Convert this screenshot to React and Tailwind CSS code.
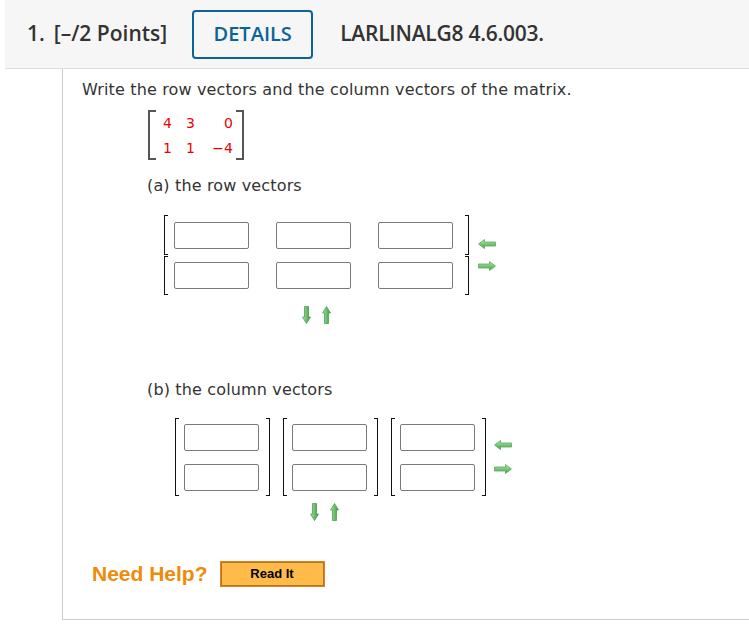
import React from 'react'

function HArrow({ dir }) {
  const id = `h${dir}`
  const pts =
    dir === 'left'
      ? '0.5,5 6.5,0.5 6.5,3 17.5,3 17.5,7 6.5,7 6.5,9.5'
      : '17.5,5 11.5,0.5 11.5,3 0.5,3 0.5,7 11.5,7 11.5,9.5'
  return (
    <svg width="18" height="10" viewBox="0 0 18 10">
      <defs>
        <linearGradient id={id} x1="0" y1="0" x2="0" y2="1">
          <stop offset="0" stopColor="#b8e6b4" />
          <stop offset="0.5" stopColor="#78c878" />
          <stop offset="1" stopColor="#3f9a45" />
        </linearGradient>
      </defs>
      <polygon points={pts} fill={`url(#${id})`} stroke="#5aa85a" strokeWidth="0.8" />
    </svg>
  )
}

function VArrow({ dir }) {
  const id = `v${dir}`
  const pts =
    dir === 'down'
      ? '2.5,0.5 6.5,0.5 6.5,11 8.5,11 4.5,17.5 0.5,11 2.5,11'
      : '2.5,17.5 6.5,17.5 6.5,7 8.5,7 4.5,0.5 0.5,7 2.5,7'
  return (
    <svg width="9" height="18" viewBox="0 0 9 18">
      <defs>
        <linearGradient id={id} x1="0" y1="0" x2="1" y2="0">
          <stop offset="0" stopColor="#b8e6b4" />
          <stop offset="0.5" stopColor="#6cc06c" />
          <stop offset="1" stopColor="#3a9040" />
        </linearGradient>
      </defs>
      <polygon points={pts} fill={`url(#${id})`} stroke="#4e9e52" strokeWidth="0.8" />
    </svg>
  )
}

function Box() {
  return <div className="w-[75px] h-[27px] border border-[#7a7a7a] rounded-[2px] bg-white" />
}

function RowVector({ top }) {
  return (
    <div className={`flex items-center w-[305px] ${top ? 'h-[40px]' : 'h-[39px]'}`}>
      <div className="w-[4px] h-full border-l border-t border-b border-[#111]" />
      <div className="flex gap-[27px] ml-[6px]">
        <Box />
        <Box />
        <Box />
      </div>
      <div className="ml-auto w-[4px] h-full border-r border-t border-b border-[#111]" />
    </div>
  )
}

function ColVector() {
  return (
    <div className="flex items-center h-[78px]">
      <div className="w-[4px] h-full border-l border-t border-b border-[#111]" />
      <div className="flex flex-col gap-[13px] ml-[5px] mr-[7px]">
        <Box />
        <Box />
      </div>
      <div className="w-[4px] h-full border-r border-t border-b border-[#111]" />
    </div>
  )
}

export default function App() {
  return (
    <div className="w-[749px] h-[626px] bg-white overflow-hidden">
      <div className="ml-[5px] h-[69px] bg-[#f6f6f6] border-b border-[#dedede] flex items-center pl-[22px] text-[21px] font-semibold text-[#333] font-['Open_Sans',sans-serif]">
        <span>1.</span>
        <span className="ml-[9px]">[–/2 Points]</span>
        <div className="ml-[25px] w-[121px] h-[49px] border-2 border-[#0a6399] rounded-[4px] flex items-center justify-center text-[20px] text-[#0a6399]">
          DETAILS
        </div>
        <span className="ml-[27px] tracking-[-0.25px]">LARLINALG8 4.6.003.</span>
      </div>

      <div className="ml-[62px] h-[551px] border-l border-b border-[#cdcdcd] pl-[19px] pt-[11px] text-[16px] tracking-[0.15px] text-[#333] font-['DejaVu_Sans',Verdana,sans-serif]">
        <p className="leading-[20px]">Write the row vectors and the column vectors of the matrix.</p>

        <div className="ml-[66px] mt-[10px] flex h-[50px]">
          <div className="w-[8px] h-full border-l-2 border-t-2 border-b-2 border-[#555]" />
          <div className="grid grid-cols-[16px_23px_38px] pt-[1px] pr-[3px] text-right text-[14px] tracking-normal leading-[25px] text-[#e00]">
            <span>4</span>
            <span>3</span>
            <span>0</span>
            <span>1</span>
            <span>1</span>
            <span>−4</span>
          </div>
          <div className="w-[8px] h-full border-r-2 border-t-2 border-b-2 border-[#555]" />
        </div>

        <p className="ml-[65px] mt-[16px] leading-[20px]">(a) the row vectors</p>

        <div className="ml-[82px] mt-[19px] flex items-center">
          <div className="flex flex-col gap-[1px]">
            <RowVector top />
            <RowVector />
          </div>
          <div className="ml-[9px] flex flex-col gap-[12px]">
            <HArrow dir="left" />
            <HArrow dir="right" />
          </div>
        </div>

        <div className="ml-[220px] mt-[11px] flex gap-[11px]">
          <VArrow dir="down" />
          <VArrow dir="up" />
        </div>

        <p className="ml-[65px] mt-[56px] leading-[20px]">(b) the column vectors</p>

        <div className="ml-[93px] mt-[18px] flex items-center">
          <div className="flex gap-[13px]">
            <ColVector />
            <ColVector />
            <ColVector />
          </div>
          <div className="ml-[8px] flex flex-col gap-[14px]">
            <HArrow dir="left" />
            <HArrow dir="right" />
          </div>
        </div>

        <div className="ml-[228px] mt-[7px] flex gap-[11px]">
          <VArrow dir="down" />
          <VArrow dir="up" />
        </div>

        <div className="ml-[10px] mt-[37px] flex items-center tracking-normal font-['Liberation_Sans',Arial,sans-serif]">
          <span className="text-[21px] font-bold text-[#ef8a0a]">Need Help?</span>
          <div className="ml-[12px] w-[105px] h-[26px] bg-[#d8862a] p-[1px]">
            <div className="w-full h-full border border-[#c06f14] bg-[#ffbb4a] flex items-center justify-center text-[13px] font-bold text-black">
              Read It
            </div>
          </div>
        </div>
      </div>
    </div>
  )
}
